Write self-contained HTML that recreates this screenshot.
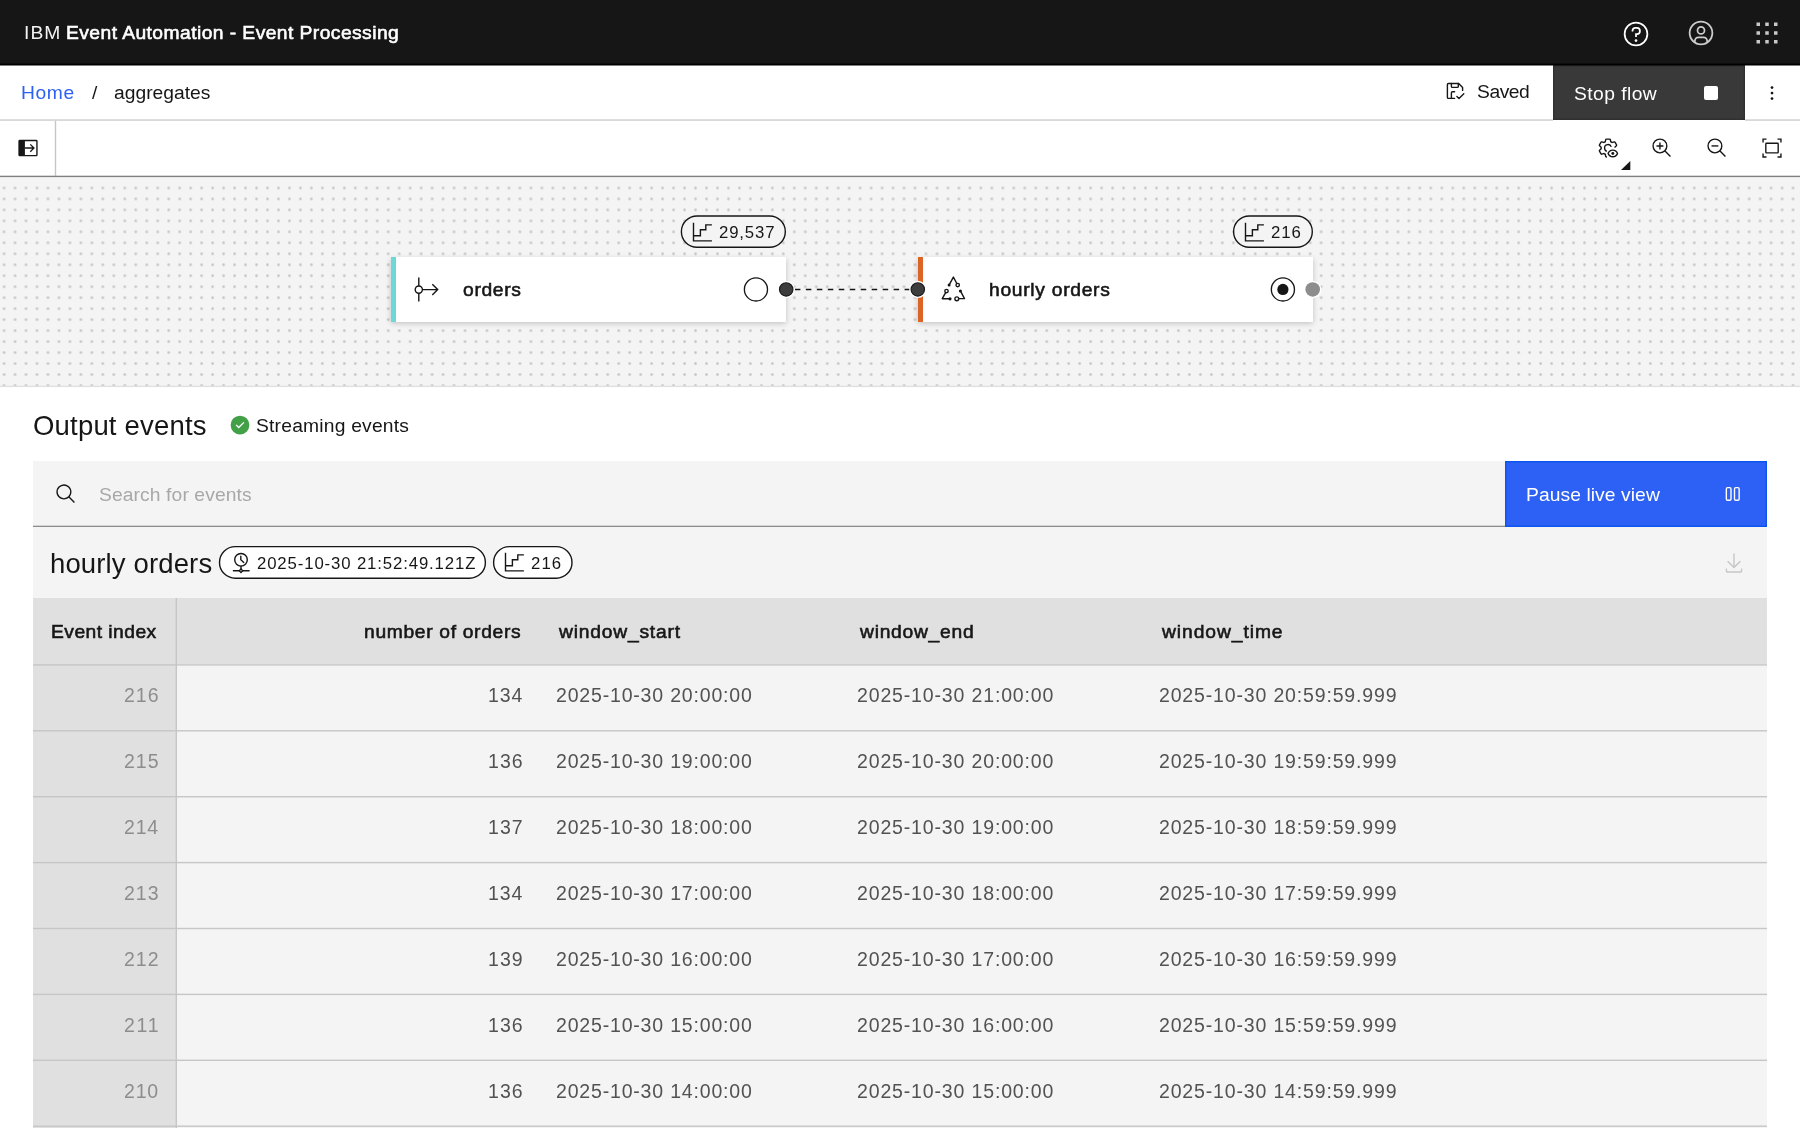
<!DOCTYPE html>
<html lang="en">
<head>
<meta charset="utf-8">
<title>IBM Event Automation - Event Processing</title>
<style>
html,body{margin:0;padding:0;}
body{width:1800px;height:1128px;overflow:hidden;background:#fff;position:relative;font-family:"Liberation Sans",sans-serif;color:#161616;}
.abs{position:absolute;}
.t{position:absolute;white-space:pre;display:block;will-change:transform;}
svg{position:absolute;display:block;overflow:visible;}
header{position:absolute;left:0;top:0;width:1800px;height:65px;background:#161616;}
.crumbs{position:absolute;left:0;top:65px;width:1800px;height:56px;background:#fff;}
.toolbar{position:absolute;left:0;top:121px;width:1800px;height:56px;background:#fff;}
.canvas{position:absolute;left:0;top:177px;width:1800px;height:210px;background-color:#f4f4f4;overflow:hidden;}
.dots{position:absolute;left:0;top:5px;width:1812px;height:206px;transform-origin:0 0;transform:scale(0.99775);
  background-image:radial-gradient(circle at center,#c3c3c3 0,#c3c3c3 0.75px,rgba(195,195,195,0) 1.8px);background-size:11px 11px;background-position:-1.41px 0.46px;}
.node{position:absolute;top:257px;height:65px;width:395px;background:#fff;box-shadow:0 1.5px 5.5px rgba(0,0,0,.22);}
.node i{position:absolute;left:0;top:0;width:5px;height:65px;}
.panel{position:absolute;left:33px;top:461px;width:1734px;height:667px;background:#f4f4f4;}
.ico{fill:none;stroke:#161616;stroke-width:1.4;}
</style>
</head>
<body>
<header>
<span class="t" style="left:24.1px;top:20.0px;font-size:19.25px;line-height:25px;letter-spacing:1.09px;color:#f4f4f4;">IBM</span><span class="t" style="left:66.0px;top:20.0px;font-size:19.25px;line-height:25px;-webkit-text-stroke:0.6px currentColor;letter-spacing:0.44px;color:#ffffff;">Event Automation - Event Processing</span>
<svg style="left:1621.500px;top:20.200px" width="28" height="28" viewBox="0 0 32 32" fill="#fff"><path d="M16,2A14,14,0,1,0,30,16,14,14,0,0,0,16,2Zm0,26A12,12,0,1,1,28,16,12,12,0,0,1,16,28Z"/><circle cx="16" cy="23.5" r="1.5"/><path d="M17,8H15.5A4.49,4.49,0,0,0,11,12.5V13h2v-.5A2.5,2.5,0,0,1,15.5,10H17a2.5,2.5,0,0,1,0,5H15v4.5h2V17a4.5,4.5,0,0,0,0-9Z"/></svg>
<svg style="left:1687.3px;top:19px" width="28" height="28" viewBox="0 0 32 32" fill="#cdcdcd"><path d="M16,8a5,5,0,1,0,5,5A5,5,0,0,0,16,8Zm0,8a3,3,0,1,1,3-3A3.0034,3.0034,0,0,1,16,16Z"/><path d="M16,2A14,14,0,1,0,30,16,14.0158,14.0158,0,0,0,16,2ZM10,26.3765V25a3.0033,3.0033,0,0,1,3-3h6a3.0033,3.0033,0,0,1,3,3v1.3765a11.8989,11.8989,0,0,1-12,0Zm13.9925-1.4507A5.0016,5.0016,0,0,0,19,20H13a5.0016,5.0016,0,0,0-4.9925,4.9258,12,12,0,1,1,15.985,0Z"/></svg>
<svg style="left:1753.2px;top:19px" width="28" height="28" viewBox="0 0 32 32" fill="#c8c8c8"><path d="M14 4H18V8H14zM4 4H8V8H4zM24 4H28V8H24zM14 14H18V18H14zM4 14H8V18H4zM24 14H28V18H24zM14 24H18V28H14zM4 24H8V28H4zM24 24H28V28H24z"/></svg>
</header>

<nav aria-label="Breadcrumb">
<div class="crumbs"></div>
<a class="t" style="left:21.4px;top:80.0px;font-size:19.25px;line-height:25px;letter-spacing:0.58px;color:#2d60f4;">Home</a><span class="t" style="left:92.4px;top:80.0px;font-size:19.25px;line-height:25px;letter-spacing:0.00px;color:#161616;">/</span><span class="t" style="left:113.8px;top:80.0px;font-size:19.25px;line-height:25px;letter-spacing:0.01px;color:#161616;">aggregates</span>
</nav>
<main>
<svg class="ico" style="left:1436px;top:72px" width="40" height="40" viewBox="0 0 40 40" stroke-linecap="round" stroke-linejoin="round"><path d="M18.6 26.4H12.4a1 1 0 0 1-1-1V12.5a1 1 0 0 1 1-1H22.7L26.6 15.4V18.4"/><path d="M15.4 11.5V14.4a1 1 0 0 0 1 1H21.3a1 1 0 0 0 1-1V11.5"/><path d="M15.4 26.4V20.7a1 1 0 0 1 1-1H18.6"/><path d="M20.9 24.5L23 26.5L27.8 21.8"/></svg>
<span class="t" style="left:1477.0px;top:79.0px;font-size:19.25px;line-height:25px;letter-spacing:-0.45px;color:#161616;">Saved</span>
<div class="abs" style="left:1553px;top:65px;width:191.800px;height:54.700px;background:#393939;box-shadow:inset 0 0 0 1.400px #303030;"></div>
<span class="t" style="left:1573.8px;top:81.0px;font-size:19.25px;line-height:25px;letter-spacing:0.44px;color:#ffffff;">Stop flow</span>
<div class="abs" style="left:1704px;top:85.5px;width:14px;height:14px;border-radius:2px;background:#fff;"></div>
<svg style="left:1761px;top:82px" width="22" height="22" viewBox="0 0 32 32" fill="#161616"><circle cx="16" cy="8" r="2"/><circle cx="16" cy="16" r="2"/><circle cx="16" cy="24" r="2"/></svg>

<div class="toolbar"></div>
<svg style="left:16.5px;top:137.3px" width="22" height="22" viewBox="0 0 32 32" fill="#161616"><path d="M28,4H4A2,2,0,0,0,2,6V26a2,2,0,0,0,2,2H28a2,2,0,0,0,2-2V6A2,2,0,0,0,28,4Zm0,22H11.500V6H28Z"/><path d="M11.500 15H22.200L18.600 11.400 20 10 26 16 20 22 18.600 20.600 22.200 17H11.500z"/></svg>
<!-- toolbar right icons -->
<svg style="left:1597.1px;top:137.4px" width="22" height="22" viewBox="0 0 32 32" fill="#161616"><path d="M16,22a6,6,0,1,1,5.700-7.900l-1.900.6A3.910,3.910,0,0,0,16,12a3.910,3.910,0,0,0-4,4,3.910,3.910,0,0,0,2.500,3.700L13.800,21.600A6,6,0,0,0,16,22Z"/><path d="M13.640,30a2,2,0,0,1-2-1.610l-.51-2.520a11.350,11.350,0,0,1-1.310-.75l-2.430.82a2,2,0,0,1-.64.1,2,2,0,0,1-1.730-1L2.700,21a2,2,0,0,1,.41-2.510L5,16.770c0-.26,0-.51,0-.77s0-.51,0-.76L3.110,13.550A2,2,0,0,1,2.700,11L5.060,7a2,2,0,0,1,1.730-1,2,2,0,0,1,.64.1l2.420.82a11.480,11.480,0,0,1,1.320-.75l.51-2.520a2,2,0,0,1,2-1.610h4.720a2,2,0,0,1,2,1.610l.51,2.520a11.350,11.350,0,0,1,1.310.75l2.430-.82a2,2,0,0,1,.64-.1,2,2,0,0,1,1.730,1L29.300,11a2,2,0,0,1-.41,2.510L26.200,15.900l-1.350-1.470L27.570,12,25.210,8,21.770,9.120a9.360,9.360,0,0,0-2.700-1.570L18.360,4H13.640l-.71,3.550a8.860,8.860,0,0,0-2.710,1.570L6.790,8,4.430,12l2.720,2.400a8.900,8.900,0,0,0,0,3.130L4.430,20l2.360,4,3.440-1.120a9.360,9.360,0,0,0,2.700,1.570L13.640,28l.9.100L14.400,30Z"/><path d="M30.800,23.500C29.700,20.500,26.700,18,23,18s-6.700,2.500-7.800,5.500a1.300,1.300,0,0,0,0,.9c1.100,3,4.100,5.400,7.800,5.400s6.700-2.400,7.800-5.400A1.300,1.300,0,0,0,30.800,23.500ZM23,27.700c-2.500,0-4.800-1.600-5.700-3.800.9-2.200,3.200-3.800,5.700-3.800s4.800,1.600,5.700,3.800C27.800,26.100,25.500,27.700,23,27.700Z"/><circle cx="23" cy="23.900" r="2.100"/></svg>
<svg style="left:1620.7px;top:161px" width="9.3" height="8.9" viewBox="0 0 10 10" preserveAspectRatio="none" fill="#161616"><path d="M10 0V10H0z"/></svg>
<svg style="left:1651px;top:137px" width="22" height="22" viewBox="0 0 32 32" fill="#161616"><path d="M18 12L14 12 14 8 12 8 12 12 8 12 8 14 12 14 12 18 14 18 14 14 18 14 18 12z"/><path d="M21.4479,20A10.856,10.856,0,0,0,24,13,11,11,0,1,0,13,24a10.856,10.856,0,0,0,7-2.5521L27.5859,29,29,27.5859ZM13,22a9,9,0,1,1,9-9A9.01,9.01,0,0,1,13,22Z"/></svg>
<svg style="left:1706px;top:137px" width="22" height="22" viewBox="0 0 32 32" fill="#161616"><path d="M8 12H18V14H8z"/><path d="M21.4479,20A10.856,10.856,0,0,0,24,13,11,11,0,1,0,13,24a10.856,10.856,0,0,0,7-2.5521L27.5859,29,29,27.5859ZM13,22a9,9,0,1,1,9-9A9.01,9.01,0,0,1,13,22Z"/></svg>
<svg style="left:1761px;top:137px" width="22" height="22" viewBox="0 0 32 32" fill="#161616"><path d="M8 2H2v6h2V4h4zM24 2h6v6h-2V4h-4zM8 30H2v-6h2v4h4zM24 30h6v-6h-2v4h-4z"/><path d="M24,24H8a2,2,0,0,1-2-2V10A2,2,0,0,1,8,8H24a2,2,0,0,1,2,2V22A2,2,0,0,1,24,24ZM8,10V22H24V10Z"/></svg>

<div class="canvas"><div class="dots"></div></div>
<svg style="left:0;top:0" width="1800" height="400" viewBox="0 0 1800 400" fill="none" stroke="#161616" stroke-width="1.4">
<path d="M794.900 289.450H912" stroke-dasharray="5.500 5.470"/>
<rect x="681.400" y="216" width="103.900" height="31.300" rx="15.650" fill="#f4f4f4"/>
<rect x="1233.600" y="216" width="78.700" height="31.300" rx="15.650" fill="#f4f4f4"/>
</svg>
<!-- node 1 -->
<svg class="ico" style="left:692px;top:221.5px" width="20" height="20" viewBox="0 0 20 20" stroke-width="1.35"><path d="M1.5 0.800V18.900H19.900"/><path d="M1.500 13.700H8.400V7.800H13.800V2.900H19.900"/></svg>
<span class="t" style="left:719.0px;top:222.0px;font-size:16.75px;line-height:22px;letter-spacing:0.85px;color:#161616;">29,537</span>
<div class="node" style="left:391px;"><i style="background:#6dd8d6"></i></div>
<svg class="ico" style="left:414px;top:277px" width="26" height="26" viewBox="0 0 26 26" stroke-width="1.5"><path d="M4.800 0.600V8.900M4.800 16.300V24.500M8.500 12.600H23.500M18.300 7.200L23.700 12.600L18.300 18"/><circle cx="4.800" cy="12.600" r="3.600"/></svg>
<span class="t" style="left:462.7px;top:277.0px;font-size:19.25px;line-height:25px;-webkit-text-stroke:0.6px currentColor;letter-spacing:0.67px;color:#161616;">orders</span>
<!-- node 2 -->
<svg class="ico" style="left:1244.2px;top:221.500px" width="20" height="20" viewBox="0 0 20 20" stroke-width="1.35"><path d="M1.500 0.800V18.900H19.900"/><path d="M1.500 13.700H8.400V7.800H13.800V2.900H19.900"/></svg>
<span class="t" style="left:1271.1px;top:222.0px;font-size:16.75px;line-height:22px;letter-spacing:0.96px;color:#161616;">216</span>
<div class="node" style="left:918px;"><i style="background:#dc6526"></i></div>
<svg class="ico" style="left:934px;top:270px" width="40" height="40" viewBox="0 0 40 40" stroke-linejoin="round" stroke-linecap="round"><path d="M15.300 14.700L19.400 7.100L22.800 13.500M11.600 22.700L8.300 28.700H16M26.400 20.900L30.500 28.600H24.800"/><circle cx="23.700" cy="15.100" r="1.700"/><circle cx="12.500" cy="21.100" r="1.700"/><circle cx="22.800" cy="28.800" r="1.900"/><circle cx="15.100" cy="15.100" r="0.800" fill="#161616"/><circle cx="26.400" cy="20.900" r="0.800" fill="#161616"/><circle cx="16" cy="28.800" r="0.900" fill="#161616"/></svg>
<span class="t" style="left:989.2px;top:277.0px;font-size:19.25px;line-height:25px;-webkit-text-stroke:0.6px currentColor;letter-spacing:0.71px;color:#161616;">hourly orders</span>

<svg style="left:0;top:0" width="1800" height="400" viewBox="0 0 1800 400" stroke="#161616" stroke-width="1.35">
<circle cx="755.950" cy="289.450" r="11.550" fill="#fff"/>
<circle cx="1282.900" cy="289.450" r="11.550" fill="#fff"/>
<circle cx="1282.900" cy="289.450" r="5.600" fill="#161616" stroke="none"/>
<g stroke="#fff" stroke-width="1.400">
<circle cx="786.200" cy="289.450" r="7.900" fill="#fff"/><circle cx="917.800" cy="289.450" r="7.900" fill="#fff"/><circle cx="1312.700" cy="289.450" r="7.900" fill="#fff"/>
</g>
<circle cx="786.200" cy="289.450" r="6.700" fill="#3d3d3d" stroke="#1c1c1c" stroke-width="1.200"/>
<circle cx="917.800" cy="289.450" r="6.700" fill="#3d3d3d" stroke="#1c1c1c" stroke-width="1.200"/>
<circle cx="1312.700" cy="289.450" r="7.300" fill="#8d8d8d" stroke="none"/>
</svg>

<!-- output events -->
<h2 class="t" style="left:33.1px;top:408.0px;font-size:27.5px;line-height:36px;letter-spacing:0.19px;color:#161616;margin:0;font-weight:400;">Output events</h2>
<svg style="left:230.200px;top:415.200px" width="20" height="20" viewBox="0 0 32 32" fill="#42a047"><path d="M16,1A15,15,0,1,0,31,16,15,15,0,0,0,16,1ZM14,21.5908l-5-5L10.5906,15,14,18.4092,21.41,11l1.5957,1.5859Z"/></svg>
<span class="t" style="left:256.4px;top:413.0px;font-size:19.25px;line-height:25px;letter-spacing:0.21px;color:#161616;">Streaming events</span>
<div class="panel"></div>
<svg style="left:54.900px;top:483.300px" width="22" height="22" viewBox="0 0 32 32" fill="#161616"><path d="M29,27.5859l-7.5521-7.5521a11.0177,11.0177,0,1,0-1.4141,1.4141L27.5859,29ZM4,13a9,9,0,1,1,9,9A9.01,9.01,0,0,1,4,13Z"/></svg>
<span class="t" style="left:99.1px;top:482.0px;font-size:19.25px;line-height:25px;letter-spacing:0.11px;color:#a8a8a8;">Search for events</span>
<div class="abs" style="left:1505px;top:461px;width:262px;height:65.800px;background:#2d60f4;box-shadow:inset 0 0 0 1.400px #0c55ef;"></div>
<span class="t" style="left:1526.0px;top:482.0px;font-size:19.25px;line-height:25px;letter-spacing:0.08px;color:#ffffff;">Pause live view</span>
<svg style="left:1712px;top:474px" width="40" height="40" viewBox="0 0 40 40" fill="none" stroke="#fff" stroke-width="1.400"><rect x="14.350" y="13.600" width="4.650" height="12.650" rx="1.300"/><rect x="22.500" y="13.600" width="4.650" height="12.650" rx="1.300"/></svg>

<svg style="left:0;top:540px" width="700" height="50" viewBox="0 540 700 50" fill="#fff" stroke="#161616" stroke-width="1.400">
<rect x="219.500" y="546.600" width="265.900" height="31.600" rx="15.800"/>
<rect x="493.600" y="546.600" width="78.400" height="31.600" rx="15.800"/>
</svg>
<h3 class="t" style="left:50.1px;top:546.0px;font-size:27.5px;line-height:36px;letter-spacing:0.14px;color:#161616;margin:0;font-weight:400;">hourly orders</h3>
<svg class="ico" style="left:230.700px;top:550px" width="20" height="24" viewBox="0 0 20 24" stroke-width="1.3" stroke-linecap="round"><circle cx="10" cy="9.800" r="6.300"/><path d="M9.800 6.300V9.700L12.800 12.400M10 16.200V19M2.400 20.700H8M12 20.700H18.100"/><path d="M10 19L11.700 20.700L10 22.400L8.300 20.700Z"/></svg>
<span class="t" style="left:257.0px;top:553.0px;font-size:16.75px;line-height:22px;letter-spacing:0.87px;color:#161616;">2025-10-30 21:52:49.121Z</span>
<svg class="ico" style="left:504.200px;top:552.300px" width="20" height="20" viewBox="0 0 20 20" stroke-width="1.35"><path d="M1.500 0.800V18.900H19.900"/><path d="M1.500 13.700H8.400V7.800H13.800V2.900H19.900"/></svg>
<span class="t" style="left:530.9px;top:553.0px;font-size:16.75px;line-height:22px;letter-spacing:1.11px;color:#161616;">216</span>
<svg style="left:1723px;top:551.500px" width="22" height="22" viewBox="0 0 32 32" fill="#c6c6c6"><path d="M26,24v4H6V24H4v4a2,2,0,0,0,2,2H26a2,2,0,0,0,2-2V24ZM26,14l-1.41-1.41L17,20.17V2H15V20.17L7.41,12.59,6,14,16,24Z"/></svg>

<!-- table -->
<div role="table" aria-label="hourly orders">
<div class="abs" style="left:33px;top:598px;width:1734px;height:66px;background:#e0e0e0;"></div>
<div class="abs" style="left:33px;top:664px;width:143px;height:464px;background:#e0e0e0;"></div>
<div role="row"><span class="t" role="columnheader" style="left:50.7px;top:619.0px;font-size:19.25px;line-height:25px;-webkit-text-stroke:0.6px currentColor;letter-spacing:0.46px;color:#161616;">Event index</span><span class="t" role="columnheader" style="left:364.1px;top:619.0px;font-size:19.25px;line-height:25px;-webkit-text-stroke:0.6px currentColor;letter-spacing:0.67px;color:#161616;">number of orders</span><span class="t" role="columnheader" style="left:558.6px;top:619.0px;font-size:19.25px;line-height:25px;-webkit-text-stroke:0.6px currentColor;letter-spacing:0.79px;color:#161616;">window_start</span><span class="t" role="columnheader" style="left:859.9px;top:619.0px;font-size:19.25px;line-height:25px;-webkit-text-stroke:0.6px currentColor;letter-spacing:0.73px;color:#161616;">window_end</span><span class="t" role="columnheader" style="left:1161.6px;top:619.0px;font-size:19.25px;line-height:25px;-webkit-text-stroke:0.6px currentColor;letter-spacing:0.93px;color:#161616;">window_time</span></div>
<div role="row"><span class="t" role="cell" style="left:124.1px;top:683.0px;font-size:19.5px;line-height:25px;letter-spacing:0.98px;color:#8d8d8d;">216</span><span class="t" role="cell" style="left:487.5px;top:683.0px;font-size:19.5px;line-height:25px;letter-spacing:0.88px;color:#525252;">134</span><span class="t" role="cell" style="left:555.8px;top:683.0px;font-size:19.5px;line-height:25px;letter-spacing:0.82px;color:#525252;">2025-10-30 20:00:00</span><span class="t" role="cell" style="left:857.4px;top:683.0px;font-size:19.5px;line-height:25px;letter-spacing:0.85px;color:#525252;">2025-10-30 21:00:00</span><span class="t" role="cell" style="left:1159.1px;top:683.0px;font-size:19.5px;line-height:25px;letter-spacing:0.84px;color:#525252;">2025-10-30 20:59:59.999</span></div>
<div role="row"><span class="t" role="cell" style="left:124.1px;top:749.0px;font-size:19.5px;line-height:25px;letter-spacing:0.98px;color:#8d8d8d;">215</span><span class="t" role="cell" style="left:487.5px;top:749.0px;font-size:19.5px;line-height:25px;letter-spacing:1.04px;color:#525252;">136</span><span class="t" role="cell" style="left:555.8px;top:749.0px;font-size:19.5px;line-height:25px;letter-spacing:0.82px;color:#525252;">2025-10-30 19:00:00</span><span class="t" role="cell" style="left:857.4px;top:749.0px;font-size:19.5px;line-height:25px;letter-spacing:0.85px;color:#525252;">2025-10-30 20:00:00</span><span class="t" role="cell" style="left:1159.1px;top:749.0px;font-size:19.5px;line-height:25px;letter-spacing:0.84px;color:#525252;">2025-10-30 19:59:59.999</span></div>
<div role="row"><span class="t" role="cell" style="left:124.1px;top:815.0px;font-size:19.5px;line-height:25px;letter-spacing:0.83px;color:#8d8d8d;">214</span><span class="t" role="cell" style="left:487.5px;top:815.0px;font-size:19.5px;line-height:25px;letter-spacing:1.04px;color:#525252;">137</span><span class="t" role="cell" style="left:555.8px;top:815.0px;font-size:19.5px;line-height:25px;letter-spacing:0.82px;color:#525252;">2025-10-30 18:00:00</span><span class="t" role="cell" style="left:857.4px;top:815.0px;font-size:19.5px;line-height:25px;letter-spacing:0.85px;color:#525252;">2025-10-30 19:00:00</span><span class="t" role="cell" style="left:1159.1px;top:815.0px;font-size:19.5px;line-height:25px;letter-spacing:0.84px;color:#525252;">2025-10-30 18:59:59.999</span></div>
<div role="row"><span class="t" role="cell" style="left:124.1px;top:881.0px;font-size:19.5px;line-height:25px;letter-spacing:0.98px;color:#8d8d8d;">213</span><span class="t" role="cell" style="left:487.5px;top:881.0px;font-size:19.5px;line-height:25px;letter-spacing:0.88px;color:#525252;">134</span><span class="t" role="cell" style="left:555.8px;top:881.0px;font-size:19.5px;line-height:25px;letter-spacing:0.82px;color:#525252;">2025-10-30 17:00:00</span><span class="t" role="cell" style="left:857.4px;top:881.0px;font-size:19.5px;line-height:25px;letter-spacing:0.85px;color:#525252;">2025-10-30 18:00:00</span><span class="t" role="cell" style="left:1159.1px;top:881.0px;font-size:19.5px;line-height:25px;letter-spacing:0.84px;color:#525252;">2025-10-30 17:59:59.999</span></div>
<div role="row"><span class="t" role="cell" style="left:124.1px;top:947.0px;font-size:19.5px;line-height:25px;letter-spacing:0.98px;color:#8d8d8d;">212</span><span class="t" role="cell" style="left:487.5px;top:947.0px;font-size:19.5px;line-height:25px;letter-spacing:1.04px;color:#525252;">139</span><span class="t" role="cell" style="left:555.8px;top:947.0px;font-size:19.5px;line-height:25px;letter-spacing:0.82px;color:#525252;">2025-10-30 16:00:00</span><span class="t" role="cell" style="left:857.4px;top:947.0px;font-size:19.5px;line-height:25px;letter-spacing:0.85px;color:#525252;">2025-10-30 17:00:00</span><span class="t" role="cell" style="left:1159.1px;top:947.0px;font-size:19.5px;line-height:25px;letter-spacing:0.84px;color:#525252;">2025-10-30 16:59:59.999</span></div>
<div role="row"><span class="t" role="cell" style="left:124.1px;top:1013.0px;font-size:19.5px;line-height:25px;letter-spacing:1.71px;color:#8d8d8d;">211</span><span class="t" role="cell" style="left:487.5px;top:1013.0px;font-size:19.5px;line-height:25px;letter-spacing:1.04px;color:#525252;">136</span><span class="t" role="cell" style="left:555.8px;top:1013.0px;font-size:19.5px;line-height:25px;letter-spacing:0.82px;color:#525252;">2025-10-30 15:00:00</span><span class="t" role="cell" style="left:857.4px;top:1013.0px;font-size:19.5px;line-height:25px;letter-spacing:0.85px;color:#525252;">2025-10-30 16:00:00</span><span class="t" role="cell" style="left:1159.1px;top:1013.0px;font-size:19.5px;line-height:25px;letter-spacing:0.84px;color:#525252;">2025-10-30 15:59:59.999</span></div>
<div role="row"><span class="t" role="cell" style="left:124.1px;top:1079.0px;font-size:19.5px;line-height:25px;letter-spacing:0.83px;color:#8d8d8d;">210</span><span class="t" role="cell" style="left:487.5px;top:1079.0px;font-size:19.5px;line-height:25px;letter-spacing:1.04px;color:#525252;">136</span><span class="t" role="cell" style="left:555.8px;top:1079.0px;font-size:19.5px;line-height:25px;letter-spacing:0.82px;color:#525252;">2025-10-30 14:00:00</span><span class="t" role="cell" style="left:857.4px;top:1079.0px;font-size:19.5px;line-height:25px;letter-spacing:0.85px;color:#525252;">2025-10-30 15:00:00</span><span class="t" role="cell" style="left:1159.1px;top:1079.0px;font-size:19.5px;line-height:25px;letter-spacing:0.84px;color:#525252;">2025-10-30 14:59:59.999</span></div>
</div>

<!-- hairlines -->
<svg style="left:0;top:0;pointer-events:none" width="1800" height="1128" viewBox="0 0 1800 1128">
<rect x="0" y="63.600" width="1800" height="1.900" fill="#000"/>
<rect x="0" y="119.300" width="1553" height="1.500" fill="#d0d0d0"/>
<rect x="1745" y="119.300" width="55" height="1.500" fill="#d0d0d0"/>
<rect x="54.800" y="120.800" width="1.400" height="55" fill="#c6c6c6"/>
<rect x="0" y="175.700" width="1800" height="1.400" fill="#808080"/>
<rect x="0" y="385.700" width="1800" height="1.400" fill="#e0e0e0"/>
<rect x="33" y="525.700" width="1472" height="1.300" fill="#8d8d8d"/>
<rect x="175.600" y="598" width="1.400" height="530" fill="#c6c6c6"/>
<rect x="33" y="664.2" width="1734" height="1.4" fill="#c6c6c6"/>
<rect x="33" y="730.1" width="1734" height="1.4" fill="#c6c6c6"/>
<rect x="33" y="796.0" width="1734" height="1.4" fill="#c6c6c6"/>
<rect x="33" y="861.9" width="1734" height="1.4" fill="#c6c6c6"/>
<rect x="33" y="927.8" width="1734" height="1.4" fill="#c6c6c6"/>
<rect x="33" y="993.7" width="1734" height="1.4" fill="#c6c6c6"/>
<rect x="33" y="1059.6" width="1734" height="1.4" fill="#c6c6c6"/>
<rect x="33" y="1125.5" width="1734" height="1.4" fill="#c6c6c6"/>
</svg>
</main>
</body>
</html>
